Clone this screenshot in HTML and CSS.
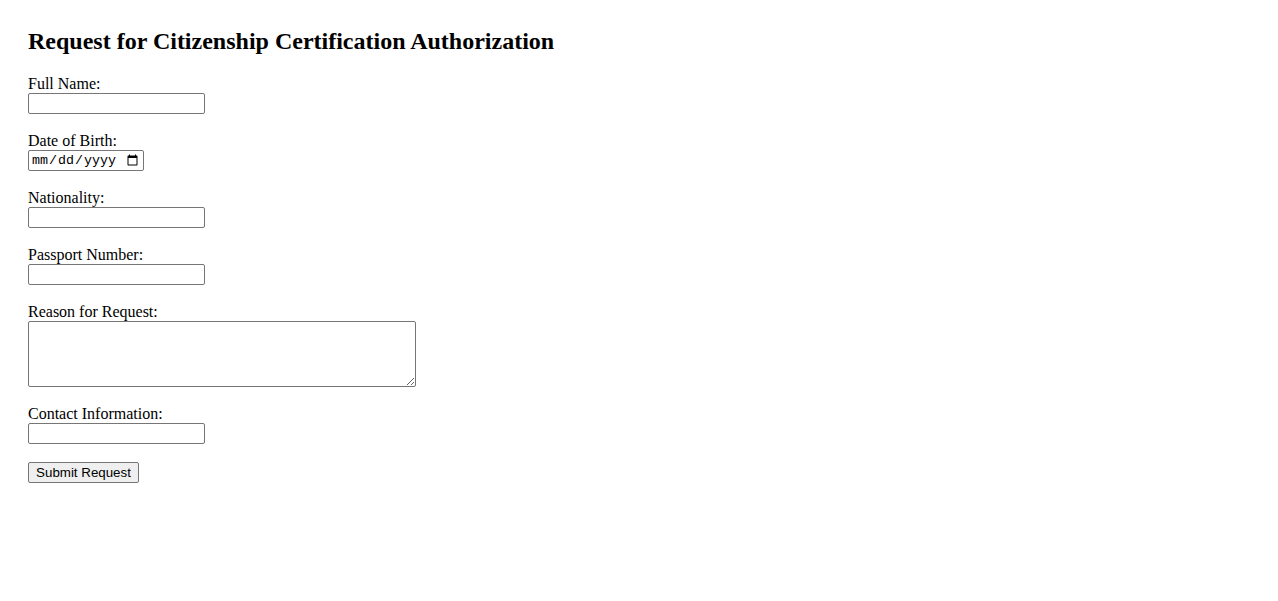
FILE: index.html
```html
<!DOCTYPE html>
<html lang="en">
<head>
<meta charset="utf-8">
<title>Request for Citizenship Certification Authorization</title>
<link rel="stylesheet" href="styles.css">
</head>
<body>
<main class="page">
  <h2 class="title">Request for Citizenship Certification Authorization</h2>
  <form class="form">
    <div class="field">
      <label class="label" for="name">Full Name:</label>
      <input class="text" type="text" id="name">
    </div>
    <div class="field">
      <label class="label" for="dob">Date of Birth:</label>
      <input class="date" type="date" id="dob">
    </div>
    <div class="field">
      <label class="label" for="nat">Nationality:</label>
      <input class="text" type="text" id="nat">
    </div>
    <div class="field">
      <label class="label" for="pass">Passport Number:</label>
      <input class="text" type="text" id="pass">
    </div>
    <div class="field">
      <label class="label" for="reason">Reason for Request:</label>
      <textarea class="area" id="reason"></textarea>
    </div>
    <div class="field">
      <label class="label" for="contact">Contact Information:</label>
      <input class="text" type="text" id="contact">
    </div>
    <div class="field">
      <button class="submit" type="button">Submit Request</button>
    </div>
  </form>
</main>
</body>
</html>
```
FILE: styles.css
```css
html, body {
  margin: 0;
  padding: 0;
  background: #fff;
}
body {
  font-family: "Liberation Serif", "Times New Roman", serif;
  color: #000;
}
.page {
  padding: 8px 28px;
}
.title {
  margin: 19px 0 20px;
  font-size: 24px;
  font-weight: bold;
  line-height: 28px;
}
.form {
  display: flex;
  flex-direction: column;
  align-items: flex-start;
}
.field {
  display: flex;
  flex-direction: column;
  align-items: flex-start;
  margin-bottom: 18px;
}
.label {
  font-size: 16px;
  line-height: 18px;
  height: 18px;
}
.text, .date, .area {
  box-sizing: border-box;
  margin: 0;
  border: 1px solid #767676;
  border-radius: 2px;
  background: #fff;
  padding: 1px 2px;
  font-family: "Liberation Sans", Arial, sans-serif;
  font-size: 13.33px;
}
.text {
  width: 177px;
  height: 21px;
}
.date {
  width: 116px;
  height: 21px;
  font-family: "Liberation Mono", "DejaVu Sans Mono", monospace;
  font-size: 13.33px;
  padding: 1px 2px;
}
.area {
  width: 388px;
  height: 66px;
  resize: both;
  display: block;
}
.submit {
  box-sizing: border-box;
  margin: 0;
  height: 21px;
  width: 111px;
  padding: 1px 6px;
  border: 1px solid #767676;
  border-radius: 2px;
  background: #efefef;
  font-family: "Liberation Sans", Arial, sans-serif;
  font-size: 13.33px;
  color: #000;
}
```
